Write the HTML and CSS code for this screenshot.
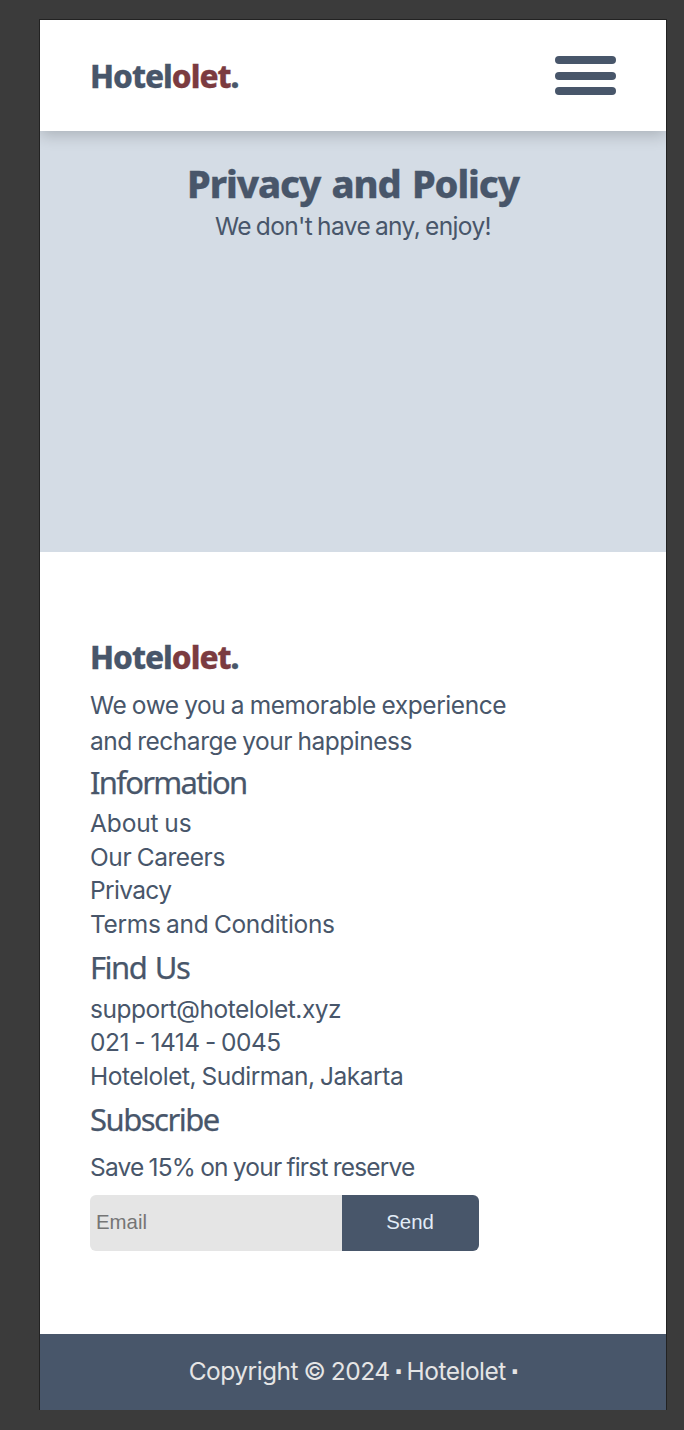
FILE: index.html
```html
<!DOCTYPE html>
<html lang="en">
<head>
<meta charset="utf-8">
<title>Hotelolet</title>
<link rel="stylesheet" href="styles.css">
</head>
<body>
<div class="page">
  <header class="header">
    <a class="logo">Hotel<span class="accent">olet</span>.</a>
    <div class="burger"><span class="bar"></span><span class="bar"></span><span class="bar"></span></div>
  </header>
  <main class="hero">
    <h1 class="title">Privacy and Policy</h1>
    <p class="subtitle">We don't have any, enjoy!</p>
  </main>
  <footer class="footer">
    <a class="logo">Hotel<span class="accent">olet</span>.</a>
    <p class="tagline">We owe you a memorable experience<br><span class="snug">and recharge your happiness</span></p>
    <h2 class="heading info">Information</h2>
    <ul class="list">
      <li class="open">About us</li>
      <li>Our Careers</li>
      <li class="tight">Privacy</li>
      <li class="loose">Terms and Conditions</li>
    </ul>
    <h2 class="heading spaced">Find Us</h2>
    <ul class="list contact">
      <li class="snug">support@hotelolet.xyz</li>
      <li class="phone">021 - 1414 - 0045</li>
      <li class="snug">Hotelolet, Sudirman, Jakarta</li>
    </ul>
    <h2 class="heading spaced">Subscribe</h2>
    <p class="offer">Save 15% on your first reserve</p>
    <form class="form"><input class="email" type="email" placeholder="Email"><button class="send" type="button">Send</button></form>
  </footer>
  <div class="copyright">Copyright © 2024 <span class="dot">·</span> Hotelolet <span class="dot">·</span></div>
</div>
</body>
</html>
```
FILE: styles.css
```css
* { box-sizing: border-box; margin: 0; padding: 0; }
body { background: #3b3b3b; color: #48566a; font: 24.5px Inter, sans-serif; letter-spacing: -.42px; word-spacing: -1px; }
.page { width: 628px; margin: 19px 0 0 39px; border: 1px solid #222; border-bottom: 0; background: #fff; overflow: hidden; }
.header { position: relative; height: 111px; padding: 0 50px; display: flex; justify-content: space-between; align-items: center; background: #fff; box-shadow: 0 4px 15px rgba(0,0,0,.2); }
.logo { display: block; padding-top: 1px; font: 800 31.5px/44px "Noto Sans", sans-serif; letter-spacing: -1px; -webkit-text-stroke: .3px; }
.accent { color: #7b3b40; }
.burger { display: flex; flex-direction: column; gap: 7.3px; }
.bar { width: 61px; height: 8px; border-radius: 4px; background: #48566a; }
.hero { height: 421px; padding-top: 26px; background: #d4dce5; text-align: center; }
.title { font: 800 38px/52px "Noto Sans", sans-serif; letter-spacing: -1.1px; word-spacing: 2.5px; -webkit-text-stroke: .3px; }
.subtitle { margin-top: 1.5px; line-height: 30px; letter-spacing: -.62px; word-spacing: -1.4px; }
.footer { height: 782px; padding: 82px 50px 0; }
.tagline { margin-top: 8px; line-height: 36px; }
.heading { margin: 3px 0 5px; font: 400 31px/40px "Noto Sans", sans-serif; letter-spacing: -1.5px; word-spacing: 2px; -webkit-text-stroke: .25px #48566a; }
.info { letter-spacing: -1.72px; }
.spaced { margin: 6px 0 5px; }
.list { list-style: none; line-height: 33.6px; }
.contact { padding-top: .4px; margin-bottom: -.4px; }
.open { letter-spacing: -.12px; }
.loose { letter-spacing: -.33px; }
.phone { letter-spacing: -.5px; }
.snug { letter-spacing: -.48px; }
.tight { letter-spacing: -.65px; }
.offer { margin-top: 10px; line-height: 36px; letter-spacing: -.8px; }
.form { display: flex; width: 388.5px; height: 55.5px; margin-top: 10px; border-radius: 6px; overflow: hidden; }
.email { width: 251.5px; border: 0; padding: 0 6px; background: #e5e5e5; font: 20.4px "Liberation Sans", sans-serif; letter-spacing: 0; word-spacing: 0; }
.send { flex: 1; border: 0; background: #48566a; color: #e2ecf7; font: 20.4px "Liberation Sans", sans-serif; letter-spacing: 0; }
.copyright { height: 76px; line-height: 75px; text-align: center; background: #48566a; color: #e5e5e5; letter-spacing: -.5px; }
.dot { font: bold 24px/1 "DejaVu Sans", sans-serif; letter-spacing: -1px; margin: 0 -1px; }
```
